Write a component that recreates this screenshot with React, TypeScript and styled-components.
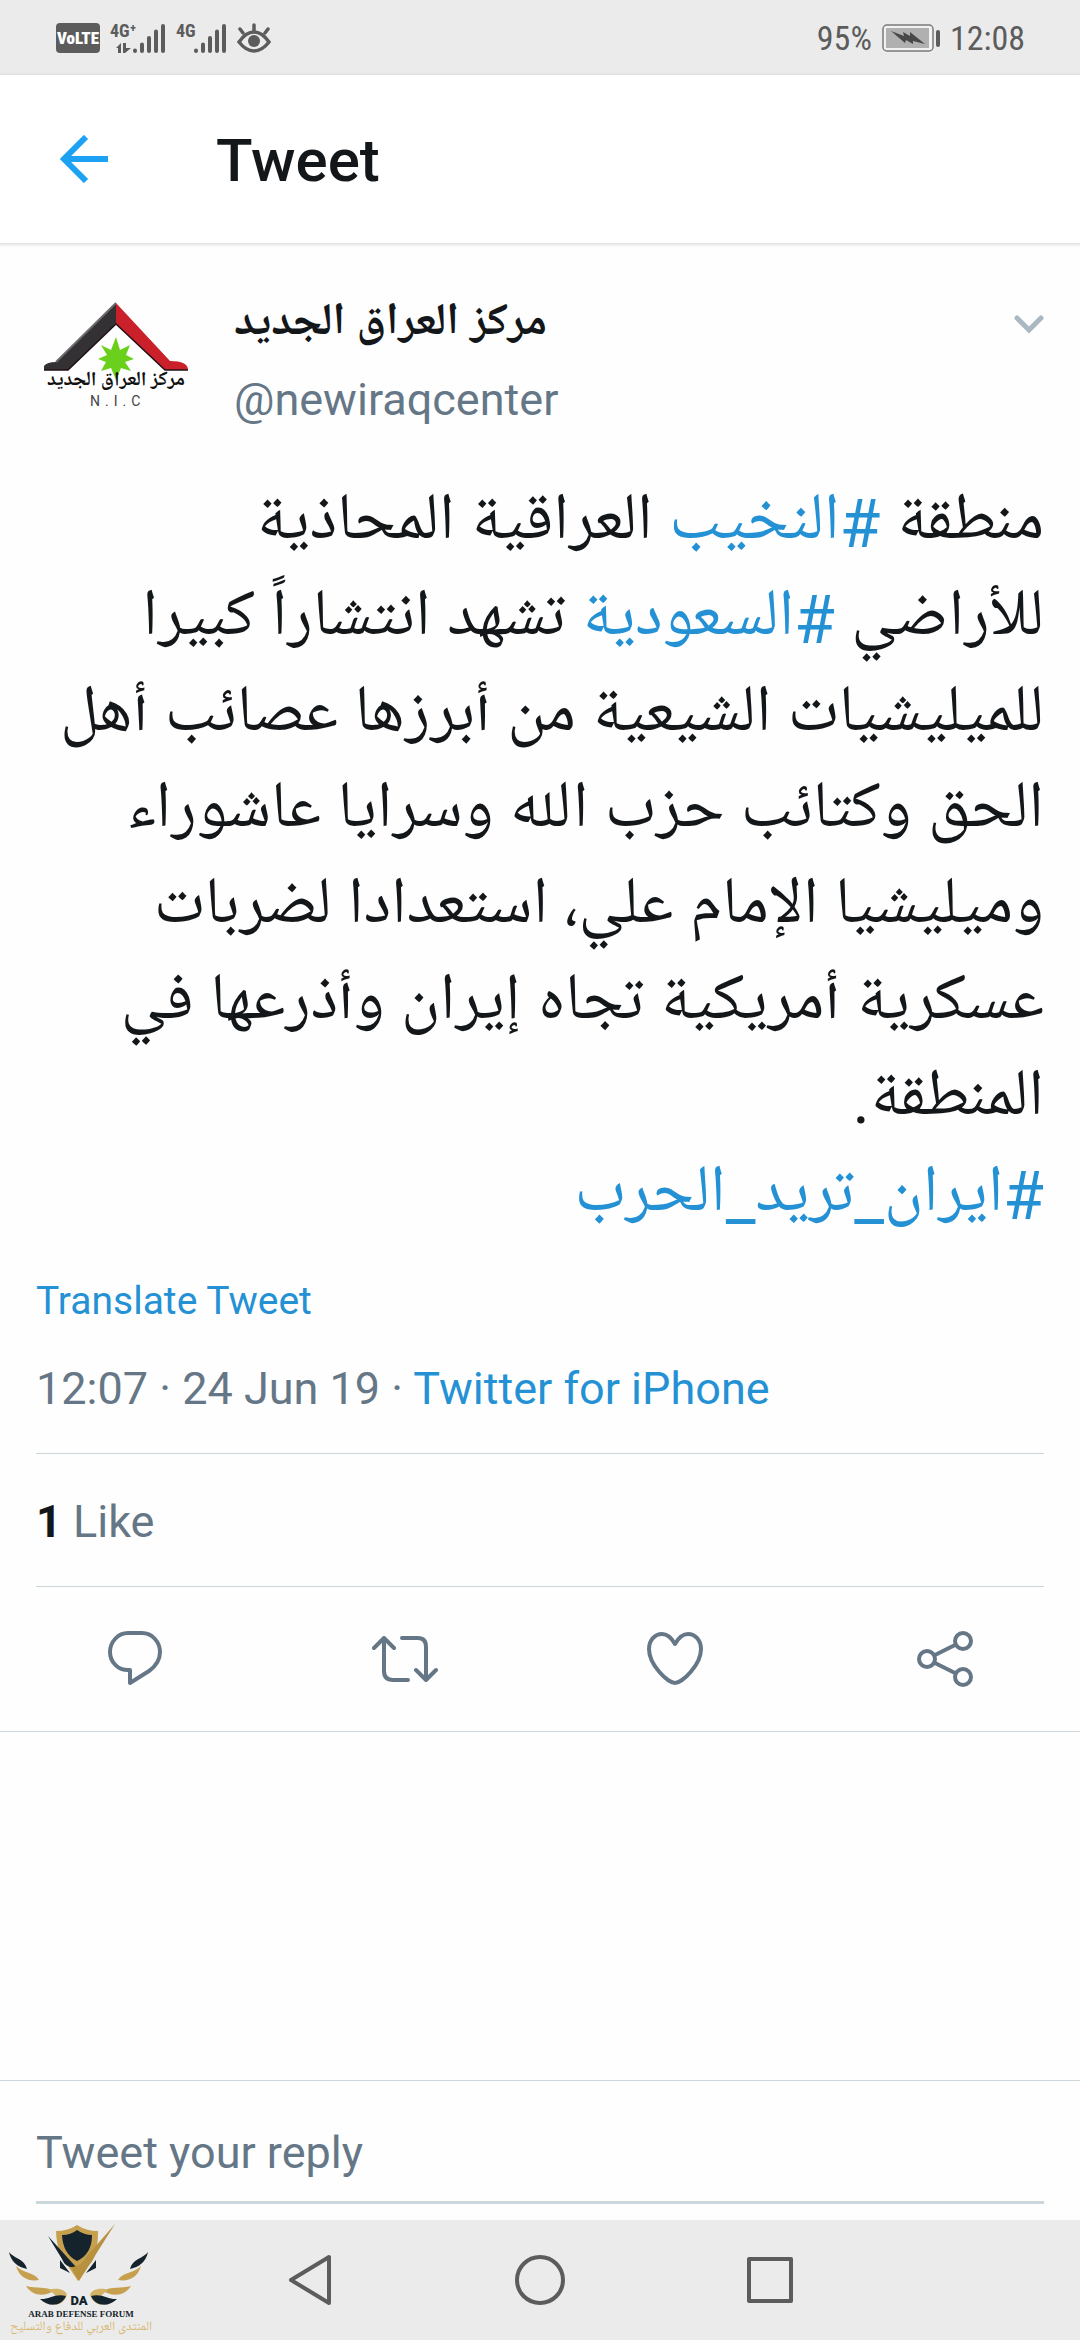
import React from "react";
import styled, { createGlobalStyle } from "styled-components";

const latin = `Roboto, "Liberation Sans"`;
const arabic = `"Noto Naskh Arabic UI", "Noto Naskh Arabic", "Noto Sans Arabic", "DejaVu Sans"`;

const colors = {
  ink: "#14171a",
  muted: "#657786",
  link: "#2491d5",
  brand: "#1da1f2",
  line: "#ccd6dd",
  system: "#ebebeb",
  systemInk: "#5c5c5c",
};

const GlobalStyle = createGlobalStyle`
  * { box-sizing: border-box; }
  body {
    margin: 0;
    background: #fefefe;
    color: ${colors.ink};
    font-family: ${latin}, ${arabic}, sans-serif;
  }
  button {
    border: 0;
    padding: 0;
    background: none;
    display: flex;
    align-items: center;
    justify-content: center;
    cursor: pointer;
  }
  a { color: ${colors.link}; text-decoration: none; }
  svg { display: block; flex: none; }
`;

const Screen = styled.div`
  display: flex;
  flex-direction: column;
  min-height: 100vh;
`;

const StatusBar = styled.div`
  display: flex;
  align-items: center;
  justify-content: space-between;
  height: 75px;
  padding: 0 55px 0 56px;
  background: ${colors.system};
  color: ${colors.systemInk};
`;

const StatusGroup = styled.div`
  display: flex;
  align-items: center;
  gap: 10px;
  font-family: "Roboto Condensed", ${latin}, sans-serif;
  font-size: 34px;
  line-height: 40px;
`;

const Header = styled.header`
  display: flex;
  align-items: center;
  gap: 96px;
  height: 168px;
  padding: 0 48px;
  background: #fff;
  box-shadow: 0 1px 3px 1px rgba(0, 0, 0, 0.12);
`;

const HeaderButton = styled.button`
  width: 72px;
  height: 72px;
`;

const Title = styled.h1`
  margin: 0;
  padding-top: 4px;
  font-size: 60px;
  line-height: 72px;
  font-weight: 500;
`;

const Main = styled.main`
  flex: 1;
`;

const TweetBody = styled.article`
  padding: 48px 36px 0;
`;

const Author = styled.div`
  display: flex;
  align-items: flex-start;
  gap: 36px;
`;

const AuthorText = styled.div`
  display: flex;
  flex-direction: column;
  align-items: flex-start;
  gap: 15px;
  flex: 1;
  padding-top: 4px;
`;

const AuthorName = styled.div`
  font-size: 45px;
  line-height: 60px;
  font-weight: 700;
`;

const Handle = styled.div`
  font-size: 45px;
  line-height: 60px;
  color: ${colors.muted};
`;

const MenuButton = styled.button`
  width: 30px;
  height: 66px;
`;

const TweetText = styled.p`
  margin: 42px 0 0;
  font-family: ${latin}, ${arabic}, sans-serif;
  font-size: 66px;
  line-height: 96px;
`;

const Translate = styled.a`
  display: block;
  margin-top: 36px;
  font-size: 39px;
  line-height: 40px;
`;

const Meta = styled.div`
  padding: 38px 0 34px;
  font-size: 45px;
  line-height: 60px;
  color: ${colors.muted};
  border-bottom: 1px solid ${colors.line};
`;

const Count = styled.strong`
  color: ${colors.ink};
`;

const Actions = styled.div`
  display: grid;
  grid-template-columns: repeat(4, 1fr);
  height: 145px;
  border-bottom: 1px solid ${colors.line};
`;

const ReplyBar = styled.div`
  padding: 36px 36px 16px;
  border-top: 1px solid ${colors.line};
`;

const ReplyInput = styled.input`
  display: block;
  width: 100%;
  height: 87px;
  padding: 0 0 14px;
  border: 0;
  border-bottom: 3px solid ${colors.line};
  outline: 0;
  background: none;
  font-family: ${latin}, sans-serif;
  font-size: 45px;
  color: ${colors.ink};
  &::placeholder { color: ${colors.muted}; opacity: 1; }
`;

const NavBar = styled.nav`
  position: relative;
  display: flex;
  justify-content: center;
  height: 120px;
  background: ${colors.system};
`;

const NavButton = styled.button`
  width: 230px;
`;

const Watermark = styled.svg`
  position: absolute;
  left: 0;
  bottom: 0;
`;

function Signal({ label, data }: { label: string; data?: boolean }) {
  return (
    <svg width={data ? 56 : 51} height="34" viewBox={data ? "0 0 56 34" : "5 0 51 34"} fill="#5c5c5c">
      <text x={data ? 0 : 5} y="16" fontSize="18" fontWeight="700" fontFamily='"Roboto Condensed", Roboto, sans-serif'>
        {label}
      </text>
      {data && <path d="M6 27l5-5v10h-3v-5zM13 22h3v5h5l-6 5h-2z" />}
      <path
        d="M25 29.500V30M32 23.500V30M39 17V30M46 10.500V30M53 5V30"
        stroke="#5c5c5c"
        strokeWidth="4"
        strokeLinecap="round"
      />
    </svg>
  );
}

function Avatar() {
  return (
    <svg width="162" height="144" viewBox="0 0 162 144" role="img" aria-label="N.I.C">
      <path d="M80 12V33L32 79H8V75Q11 71 20 71Z" fill="#333134" />
      <path d="M80 12L134 70Q152 70 152 79H129L80 33Z" fill="#c9202a" />
      <path d="M80 12L20 71" stroke="#6d6a6e" strokeWidth="2" />
      <path d="M8 79H32L80 33L129 79H152" fill="none" stroke="#201014" strokeWidth="1.500" />
      <path
        d="M80 46l4 13 10-5-4 10 8 4-9 3 6 9-10-3-5 12-5-12-10 3 5-9-8-3 9-4-6-10 10 5z"
        fill="#6bd01c"
      />
      <text x="80" y="97" textAnchor="middle" direction="rtl" fontSize="20" fontWeight="700" fontFamily={`${arabic}, sans-serif`} fill="#111">
        مركز العراق الجديد
      </text>
      <text x="54" y="115" fontSize="14" letterSpacing="5" fontFamily="Roboto, sans-serif" fill="#444">
        N.I.C
      </text>
    </svg>
  );
}

function Wing() {
  return (
    <>
      <path d="M9 32C13 38 25 39 27 49C18 47 11 42 9 32Z" fill="#14232c" />
      <path d="M16 46C22 53 35 52 39 60C28 62 19 57 16 46Z" fill="#c6a04f" />
      <path d="M26 66C36 69 46 66 54 71C44 77 32 76 26 66Z" fill="#c6a04f" />
      <path d="M48 70C58 67 66 70 67 75Q64 84 55 85C60 79 56 74 48 70Z" fill="#d4b265" />
      <path d="M40 79C48 80 55 73 66 76C62 86 49 88 40 79Z" fill="#14232c" />
    </>
  );
}

function ForumLogo() {
  return (
    <Watermark width="160" height="120" viewBox="0 0 160 120" role="img" aria-label="Arab Defense Forum">
      <Wing />
      <g transform="translate(157 0) scale(-1 1)">
        <Wing />
      </g>
      <path d="M60 40V48L70 53ZM96 40V48L86 53Z" fill="#14232c" />
      <path d="M56 11Q68 11 77 5Q86 11 98 11Q98 36 90 44L78 61L66 43Q57 34 56 11Z" fill="#c6a04f" />
      <path d="M62 15Q71 15 77 10Q84 15 92 15Q92 34 77 41Q63 34 62 15Z" fill="#14232c" />
      <path d="M48 16L76 47Q66 49 62 39Z" fill="#14232c" />
      <path d="M115 4L79 61L71 47Q80 48 87 36Z" fill="#b8913f" />
      <text x="79" y="85" textAnchor="middle" fontSize="13" fontWeight="900" fontFamily="Roboto, sans-serif" fill="#14232c">
        DA
      </text>
      <text x="81" y="97" textAnchor="middle" fontSize="9" fontWeight="700" fontFamily='"Liberation Serif", serif' fill="#14232c">
        ARAB DEFENSE FORUM
      </text>
      <text x="81" y="112" textAnchor="middle" direction="rtl" fontSize="13" fontFamily={`${arabic}, sans-serif`} fill="#d9b871">
        المنتدى العربي للدفاع والتسليح
      </text>
    </Watermark>
  );
}

const icon = { fill: "none", stroke: colors.muted, strokeWidth: 4, strokeLinecap: "round", strokeLinejoin: "round" } as const;

export default function App() {
  return (
    <Screen>
      <GlobalStyle />
      <StatusBar>
        <StatusGroup>
          <svg width="44" height="30" viewBox="0 0 44 30">
            <rect width="44" height="30" rx="4" fill="#5c5c5c" />
            <text x="22" y="21" textAnchor="middle" fontSize="17" fontWeight="900" fontFamily='"Roboto Condensed", Roboto, sans-serif' fill="#fff">
              VoLTE
            </text>
          </svg>
          <Signal label="4G⁺" data />
          <Signal label="4G" />
          <svg width="34" height="30" viewBox="0 0 34 30" fill="none" stroke="#5c5c5c" strokeWidth="3.500" strokeLinecap="round">
            <path d="M2 19Q9 9 17 9T32 19Q25 28 17 28T2 19Z" />
            <path d="M17 2V8M3 6L6 10M31 6L28 10" />
            <circle cx="17" cy="18" r="6" fill="#5c5c5c" stroke="none" />
          </svg>
        </StatusGroup>
        <StatusGroup>
          <span>95%</span>
          <svg width="58" height="28" viewBox="0 0 58 28">
            <rect x="1" y="1" width="50" height="26" rx="4" fill="#f2f2f2" stroke="#7a7a7a" strokeWidth="1.500" />
            <rect x="4" y="4" width="43" height="20" fill="#b0b0b0" />
            <rect x="54" y="6" width="4" height="17" rx="2" fill="#5c5c5c" />
            <path d="M9 7L22 12L21 8L28 12L28 8L43 20L31 17L31 20L24 16L23 19Z" fill="#484848" />
          </svg>
          <span>12:08</span>
        </StatusGroup>
      </StatusBar>
      <Header>
        <HeaderButton aria-label="Back">
          <svg width="48" height="48" viewBox="0 0 48 48" fill="none" stroke={colors.brand} strokeWidth="6">
            <path d="M48 24H4M26 2L4 24L26 46" />
          </svg>
        </HeaderButton>
        <Title>Tweet</Title>
      </Header>
      <Main>
        <TweetBody>
          <Author>
            <Avatar />
            <AuthorText>
              <AuthorName dir="rtl" lang="ar">مركز العراق الجديد</AuthorName>
              <Handle>@newiraqcenter</Handle>
            </AuthorText>
            <MenuButton aria-label="More">
              <svg width="30" height="19" viewBox="0 0 30 19" fill="none" stroke="#aab8c2" strokeWidth="5" strokeLinecap="round">
                <path d="M3 3L15 15L27 3" />
              </svg>
            </MenuButton>
          </Author>
          <TweetText dir="rtl" lang="ar">
            منطقة <a href="#nukhayb">#النخيب</a> العراقية المحاذية
            <br />
            للأراضي <a href="#saudi">#السعودية</a> تشهد انتشاراً كبيرا
            <br />
            للميليشيات الشيعية من أبرزها عصائب أهل
            <br />
            الحق وكتائب حزب الله وسرايا عاشوراء
            <br />
            وميليشيا الإمام علي، استعدادا لضربات
            <br />
            عسكرية أمريكية تجاه إيران وأذرعها في
            <br />
            المنطقة.
            <br />
            <a href="#iran">#ايران_تريد_الحرب</a>
          </TweetText>
          <Translate href="#translate">Translate Tweet</Translate>
          <Meta>
            12:07 · 24 Jun 19 · <a href="#source">Twitter for iPhone</a>
          </Meta>
          <Meta>
            <Count>1</Count> Like
          </Meta>
        </TweetBody>
        <Actions>
          <button aria-label="Reply">
            <svg width="54" height="56" viewBox="0 0 54 56" {...icon}>
              <path d="M20 2H34C44 2 52 11 52 21C52 29 48 35 41 40L22 52V39C10 40 2 31 2 21C2 11 10 2 20 2Z" />
            </svg>
          </button>
          <button aria-label="Retweet">
            <svg width="66" height="46" viewBox="0 0 66 46" {...icon}>
              <path d="M2 12L12 2L22 12M12 2V35Q12 44 21 44H36M30 2H46Q54 2 54 11V43M44 34L54 44L64 34" />
            </svg>
          </button>
          <button aria-label="Like">
            <svg width="56" height="54" viewBox="0 0 56 54" {...icon}>
              <path d="M28 12C24 5 20 2 15 2C8 2 2 8 2 17C2 33 21 51 28 51S54 33 54 17C54 8 48 2 41 2C36 2 32 5 28 12Z" />
            </svg>
          </button>
          <button aria-label="Share">
            <svg width="56" height="56" viewBox="0 0 56 56" {...icon}>
              <circle cx="10" cy="28" r="8" />
              <circle cx="46" cy="10" r="8" />
              <circle cx="46" cy="46" r="8" />
              <path d="M18 24L38 14M18 32L38 42" />
            </svg>
          </button>
        </Actions>
      </Main>
      <ReplyBar>
        <ReplyInput aria-label="Tweet your reply" placeholder="Tweet your reply" />
      </ReplyBar>
      <NavBar>
        <ForumLogo />
        <NavButton aria-label="Back">
          <svg width="44" height="52" viewBox="0 0 44 52" fill="none" stroke="#5c5c5c" strokeWidth="4" strokeLinejoin="round">
            <path d="M41 3V49L3 26Z" />
          </svg>
        </NavButton>
        <NavButton aria-label="Home">
          <svg width="52" height="52" viewBox="0 0 52 52" fill="none" stroke="#5c5c5c" strokeWidth="4">
            <circle cx="26" cy="26" r="23" />
          </svg>
        </NavButton>
        <NavButton aria-label="Recent apps">
          <svg width="46" height="46" viewBox="0 0 46 46" fill="none" stroke="#5c5c5c" strokeWidth="4" strokeLinejoin="round">
            <rect x="2" y="2" width="42" height="42" />
          </svg>
        </NavButton>
      </NavBar>
    </Screen>
  );
}
